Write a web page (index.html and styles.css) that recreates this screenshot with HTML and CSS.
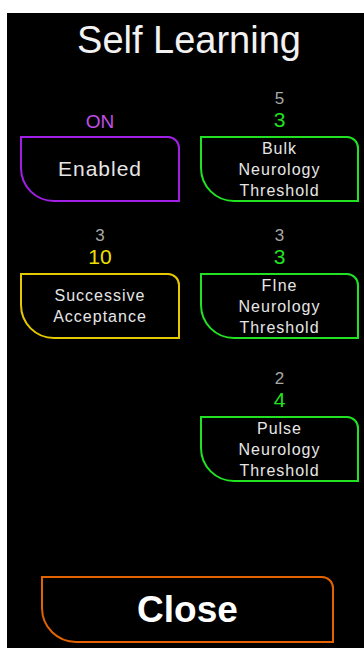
FILE: index.html
```html
<!DOCTYPE html>
<html>
<head>
<meta charset="utf-8">
<link rel="stylesheet" href="styles.css">
</head>
<body>
<div class="screen">
  <h1 class="title">Self Learning</h1>
  <div class="grid">
    <div class="cell">
      <div class="sub"></div>
      <div class="val purple-text">ON</div>
      <div class="btn btn-purple big">Enabled</div>
    </div>
    <div class="cell">
      <div class="sub">5</div>
      <div class="val green-text">3</div>
      <div class="btn btn-green">Bulk<br>Neurology<br>Threshold</div>
    </div>
    <div class="cell">
      <div class="sub">3</div>
      <div class="val yellow-text">10</div>
      <div class="btn btn-yellow">Successive<br>Acceptance</div>
    </div>
    <div class="cell">
      <div class="sub">3</div>
      <div class="val green-text">3</div>
      <div class="btn btn-green">FIne<br>Neurology<br>Threshold</div>
    </div>
    <div class="cell row3"></div>
    <div class="cell row3">
      <div class="sub">2</div>
      <div class="val green-text">4</div>
      <div class="btn btn-green">Pulse<br>Neurology<br>Threshold</div>
    </div>
  </div>
  <div class="close">Close</div>
</div>
</body>
</html>
```
FILE: styles.css
```css
html, body {
  margin: 0;
  padding: 0;
  background: #ffffff;
  overflow: hidden;
}
body {
  font-family: "Liberation Sans", Arial, sans-serif;
}
.screen {
  margin: 13px 0 0 7px;
  height: 635px;
  background: #000000;
  display: flex;
  flex-direction: column;
  padding: 5px 0 5px 13px;
  box-sizing: border-box;
}
.title {
  margin: 0;
  width: 338px;
  font-size: 38px;
  line-height: 44px;
  font-weight: normal;
  color: #f2f2f2;
  text-align: center;
}
.grid {
  margin-top: 26px;
  display: grid;
  grid-template-columns: 160px 159px;
  column-gap: 20px;
  row-gap: 23px;
}
.cell {
  display: flex;
  flex-direction: column;
  align-items: stretch;
}
.row3 {
  margin-top: 6px;
}
.sub {
  height: 20px;
  line-height: 21px;
  font-size: 17px;
  color: #a8a8a8;
  text-align: center;
}
.val {
  height: 24px;
  line-height: 24px;
  font-size: 21px;
  text-align: center;
}
.purple-text {
  font-size: 19px;
  line-height: 27px;
  color: #c24fe6;
}
.green-text { color: #22e022; }
.yellow-text { color: #f0e000; }
.btn {
  margin-top: 4px;
  height: 66px;
  box-sizing: border-box;
  border: 2px solid;
  border-radius: 0 12px 0 34px;
  display: flex;
  align-items: center;
  justify-content: center;
  text-align: center;
  color: #e6e6e6;
  font-size: 16px;
  line-height: 21px;
  letter-spacing: 1px;
}
.big {
  font-size: 21px;
  line-height: 24px;
}
.btn-purple { border-color: #a21fe8; }
.btn-green { border-color: #22e022; }
.btn-yellow { border-color: #e6c800; }
.close {
  margin-top: auto;
  margin-left: 21px;
  width: 293px;
  height: 67px;
  box-sizing: border-box;
  border: 2px solid #e36300;
  border-radius: 0 12px 0 35px;
  display: flex;
  align-items: center;
  justify-content: center;
  color: #ffffff;
  font-size: 37px;
  font-weight: bold;
}
```
